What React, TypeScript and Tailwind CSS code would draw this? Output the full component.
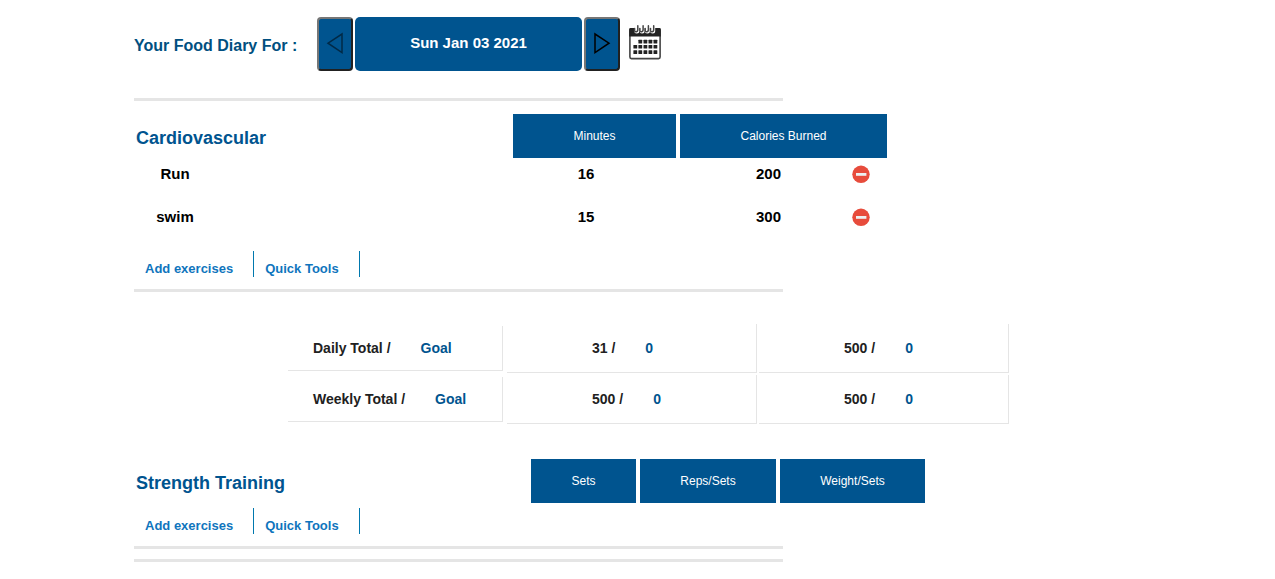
import React from "react";

const exercises = [
  { name: "Run", minutes: 16, calories: 200 },
  { name: "swim", minutes: 15, calories: 300 },
];

const totals = [
  { label: "Daily Total /", minutes: 31, calories: 500 },
  { label: "Weekly Total /", minutes: 500, calories: 500 },
];

const headCell =
  "h-11 border-l-4 border-white bg-[#00548f] bg-clip-padding p-0 text-center text-xs font-normal text-white";

function Divider({ className = "" }: { className?: string }) {
  return <hr className={`max-w-[649px] border-t-3 border-[#e5e5e5] ${className}`} />;
}

function CalendarIcon() {
  const rows = [
    { y: 15.8, xs: [13.3, 18.4, 23.4, 28.4] },
    { y: 21, xs: [8.3, 13.3, 18.4, 23.4, 28.4] },
    { y: 26.3, xs: [8.3, 13.3, 18.4, 23.4, 28.4] },
  ];
  return (
    <svg className="h-9 w-9" viewBox="0 0 36 36" aria-hidden="true">
      <rect x="2.9" y="5" width="30.2" height="29.6" rx="1.5" fill="#fff" stroke="#444" strokeWidth="1.6" />
      <path d="M2.2 5.3a1.3 1.3 0 0 1 1.3-1.3h29a1.3 1.3 0 0 1 1.3 1.3V12.4H2.2z" fill="#222" />
      {[10.8, 16.1, 21.4, 26.7].map((x) => (
        <g key={x} fill="none" strokeLinecap="round">
          <path d={`M${x - 1} 2v5`} stroke="#fff" strokeWidth="5" />
          <path d={`M${x} 1.8v4.4a1.7 1.7 0 0 1-3.2 0.6V4.6`} stroke="#444" strokeWidth="1.5" />
        </g>
      ))}
      {rows.map(({ y, xs }) =>
        xs.map((x) => (
          <rect key={`${x}-${y}`} x={x - 1.9} y={y} width="3.8" height="3.6" rx="0.5" fill="#222" />
        )),
      )}
    </svg>
  );
}

function ArrowButton({ label, d, dim }: { label: string; d: string; dim?: boolean }) {
  return (
    <button
      type="button"
      aria-label={label}
      className="flex h-[54px] w-9 items-center justify-center rounded border-2 border-t-[#767676] border-r-[#212121] border-b-[#212121] border-l-[#767676] bg-[#00548f]"
    >
      <svg className={dim ? "h-6 w-5 opacity-50" : "h-6 w-5"} viewBox="0 0 20 24" aria-hidden="true">
        <path d={d} fill="none" stroke="#000" strokeWidth="1.5" />
      </svg>
    </button>
  );
}

function SectionLinks() {
  return (
    <ul className="flex text-[13px] leading-4 font-bold text-[#0f75bd]">
      {["Add exercises", "Quick Tools"].map((text) => (
        <li key={text} className="border-r border-[#0078ae] pt-2.5 pr-5 pl-[11px]">
          <a href="#">{text}</a>
        </li>
      ))}
    </ul>
  );
}

function TotalValue({ value }: { value: number }) {
  return (
    <td className="border-r border-b border-[#e5e5e5] p-0 pl-[85px]">
      <div className="flex gap-[30px]">
        <span>{value} /</span>
        <span className="text-[#00548f]">0</span>
      </div>
    </td>
  );
}

export default function App() {
  return (
    <main className="bg-white pt-[17px] pr-4 pb-4 pl-[134px] font-['Liberation_Sans',Arial,sans-serif]">
      <header className="flex items-center">
        <h1 className="w-[183px] pt-1 text-base font-bold text-[#004f80]">Your Food Diary For :</h1>
        <div className="flex items-center gap-0.5">
          <ArrowButton label="Previous day" d="M17 2v18.5L3 11.2z" dim />
          <button
            type="button"
            className="h-[54px] w-[227px] rounded-[5px] bg-[#00548f] pb-0.5 text-[15px] font-bold text-white"
          >
            Sun Jan 03 2021
          </button>
          <ArrowButton label="Next day" d="M3 2v18.5l14-9.3z" />
        </div>
        <button type="button" aria-label="Choose a date" className="mb-1 ml-[7px]">
          <CalendarIcon />
        </button>
      </header>
      <Divider className="mt-[27px]" />

      <section className="mt-[13px]">
        <table className="w-full max-w-[753px] table-fixed border-separate border-spacing-0">
          <colgroup>
            <col />
            <col className="w-[167px]" />
            <col className="w-[211px]" />
          </colgroup>
          <thead>
            <tr>
              <th scope="col" className="p-0 pt-1 pl-0.5 text-left text-lg font-bold text-[#00548f]">
                Cardiovascular
              </th>
              <th scope="col" className={headCell}>Minutes</th>
              <th scope="col" className={headCell}>Calories Burned</th>
            </tr>
          </thead>
          <tbody className="text-[15px] leading-8 font-bold text-black">
            {exercises.map((item) => (
              <tr key={item.name} className="h-[43px] align-top">
                <td className="p-0">
                  <div className="w-[82px] text-center">{item.name}</div>
                </td>
                <td className="p-0 pr-[13px] text-center">{item.minutes}</td>
                <td className="p-0">
                  <div className="flex items-center justify-between pr-[17px] pl-20">
                    <span>{item.calories}</span>
                    <button type="button" aria-label={`Remove ${item.name}`}>
                      <svg className="h-[18px] w-[18px]" viewBox="0 0 18 18" aria-hidden="true">
                        <circle cx="9" cy="9.3" r="8.7" fill="#e74c3c" />
                        <rect x="4" y="8" width="10.4" height="2.8" fill="#ecf0f1" />
                      </svg>
                    </button>
                  </div>
                </td>
              </tr>
            ))}
          </tbody>
        </table>
        <div className="mt-[7px]">
          <SectionLinks />
        </div>
        <Divider className="mt-3" />
      </section>

      <table className="mt-[30px] ml-[150px] w-full max-w-[727px] table-fixed border-separate border-spacing-0.5 text-sm font-bold text-[#212121]">
        <colgroup>
          <col className="w-[219px]" />
          <col />
          <col />
        </colgroup>
        <tbody>
          {totals.map((row) => (
            <tr key={row.label}>
              <th scope="row" className="p-0.5 text-left">
                <div className="flex h-[45px] items-center gap-[30px] border-r border-b border-[#e5e5e5] pl-[25px]">
                  <span>{row.label}</span>
                  <span className="text-[#00548f]">Goal</span>
                </div>
              </th>
              <TotalValue value={row.minutes} />
              <TotalValue value={row.calories} />
            </tr>
          ))}
        </tbody>
      </table>

      <section className="mt-[33px]">
        <table className="w-full max-w-[791px] table-fixed border-separate border-spacing-0">
          <colgroup>
            <col />
            <col className="w-[109px]" />
            <col className="w-[140px]" />
            <col className="w-[149px]" />
          </colgroup>
          <thead>
            <tr>
              <th scope="col" className="p-0 pt-1 pl-0.5 text-left text-lg font-bold text-[#00548f]">
                Strength Training
              </th>
              <th scope="col" className={headCell}>Sets</th>
              <th scope="col" className={headCell}>Reps/Sets</th>
              <th scope="col" className={headCell}>Weight/Sets</th>
            </tr>
          </thead>
        </table>
        <div className="mt-[5px]">
          <SectionLinks />
        </div>
        <Divider className="mt-3" />
      </section>
      <Divider className="mt-2.5" />
    </main>
  );
}
